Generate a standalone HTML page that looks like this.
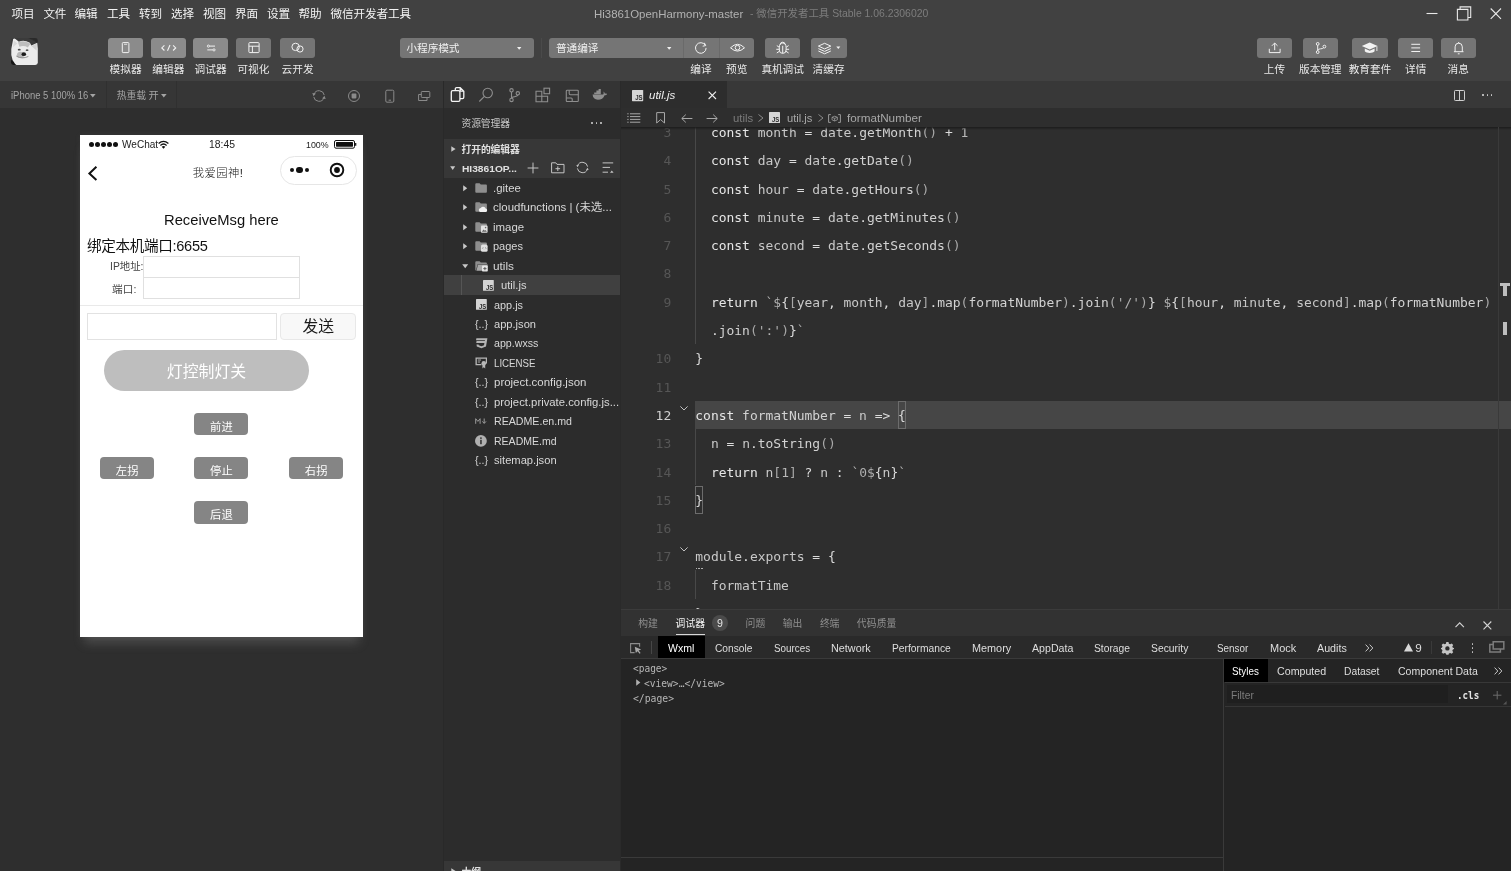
<!DOCTYPE html>
<html lang="zh">
<head>
<meta charset="utf-8">
<title>Hi3861OpenHarmony-master - 微信开发者工具</title>
<style>
*{box-sizing:border-box;margin:0;padding:0}
html,body{width:1511px;height:871px;overflow:hidden;background:#2e2e2e}
body{position:relative;font-family:"Liberation Sans","Noto Sans CJK SC",sans-serif;color:#d0d0d0;font-size:12px}
#w{position:absolute;left:0;top:0;width:1511px;height:871px;overflow:hidden;will-change:transform;filter:grayscale(1)}
.a{position:absolute}
.t{position:absolute;white-space:pre}
svg{position:absolute;overflow:visible}

.c{position:absolute;left:695.3px;white-space:pre;font-family:"DejaVu Sans Mono","Liberation Mono",monospace;font-size:12.96px;line-height:20px;height:20px;color:#dcdcdc}
.n{position:absolute;left:620px;width:51.200px;text-align:right;font-family:"DejaVu Sans Mono","Liberation Mono",monospace;font-size:12.96px;line-height:20px;color:#565656}
.k{color:#e6e6e6}.v{color:#c8c8c8}.f{color:#d2d2d2}.b{color:#a8a8a8}.s{color:#b0b0b0}.m{color:#b8b8b8}
</style>
</head>
<body>
<div id="w">
<div class="a" style="left:0px;top:0px;width:1511px;height:81px;background:#414141;"></div>
<div class="t" style="left:11.6px;top:5.60px;font-size:11.6px;line-height:16px;color:#f4f4f4;;letter-spacing:-0.203px;">项目</div>
<div class="t" style="left:43.4px;top:5.60px;font-size:11.6px;line-height:16px;color:#f4f4f4;;letter-spacing:-0.203px;">文件</div>
<div class="t" style="left:74.5px;top:5.60px;font-size:11.6px;line-height:16px;color:#f4f4f4;;letter-spacing:-0.203px;">编辑</div>
<div class="t" style="left:107px;top:5.60px;font-size:11.6px;line-height:16px;color:#f4f4f4;;letter-spacing:-0.203px;">工具</div>
<div class="t" style="left:139px;top:5.60px;font-size:11.6px;line-height:16px;color:#f4f4f4;;letter-spacing:-0.203px;">转到</div>
<div class="t" style="left:171px;top:5.60px;font-size:11.6px;line-height:16px;color:#f4f4f4;;letter-spacing:-0.203px;">选择</div>
<div class="t" style="left:203px;top:5.60px;font-size:11.6px;line-height:16px;color:#f4f4f4;;letter-spacing:-0.203px;">视图</div>
<div class="t" style="left:235px;top:5.60px;font-size:11.6px;line-height:16px;color:#f4f4f4;;letter-spacing:-0.203px;">界面</div>
<div class="t" style="left:267px;top:5.60px;font-size:11.6px;line-height:16px;color:#f4f4f4;;letter-spacing:-0.203px;">设置</div>
<div class="t" style="left:298.5px;top:5.60px;font-size:11.6px;line-height:16px;color:#f4f4f4;;letter-spacing:-0.203px;">帮助</div>
<div class="t" style="left:330.5px;top:5.60px;font-size:11.6px;line-height:16px;color:#f4f4f4;;letter-spacing:-0.112px;">微信开发者工具</div>
<div class="t" style="left:594.3px;top:5.80px;font-size:11.6px;line-height:16px;color:#b2b2b2;;transform-origin:0 50%;transform:scaleX(0.9852);">Hi3861OpenHarmony-master</div>
<div class="t" style="left:749.5px;top:6.30px;font-size:10.6px;line-height:15px;color:#7d7d7d;;transform-origin:0 50%;transform:scaleX(0.9831);">- 微信开发者工具 Stable 1.06.2306020</div>
<svg style="left:1420px;top:0px;" width="91" height="27" viewBox="0 0 91 27"><path d="M6.5 13.5H17.5" stroke="#e8e8e8" stroke-width="1.1" fill="none"/>
<path d="M37.4 9.400H47.900V20H37.400Z M40.1 9.400V6.900H50.700V17.500H47.900" stroke="#e8e8e8" stroke-width="1.1" fill="none"/>
<path d="M70.7 8.5L81 18.8M81 8.5L70.7 18.8" stroke="#e8e8e8" stroke-width="1.1" fill="none"/></svg>
<svg style="left:10.600px;top:38px" width="26.800" height="27" viewBox="0 0 27 27">
<defs><clipPath id="av"><rect x="0" y="0" width="27" height="27" rx="2.500"/></clipPath><filter id="bl" x="-20%" y="-20%" width="140%" height="140%"><feGaussianBlur stdDeviation=".55"/></filter></defs>
<g clip-path="url(#av)"><g filter="url(#bl)">
<rect x="-2" y="-2" width="31" height="31" fill="#3a3a3a"/>
<path d="M13 -2H29V8L24 3Z" fill="#2c2c2c"/>
<path d="M-2 20V29H9Z" fill="#161616"/>
<path d="M.3 11L2.200 .8Q3.200 -.2 4.500 .8L8 3.600Q13 1.400 19 4.600L20.500 7.500L26.500 4.800L27.500 13V29H8Q-1 24 .3 11Z" fill="#ececec"/>
<path d="M7 4.200Q13 1.800 19.500 5.600L17 9.500Q13 7 8.500 8.800Z" fill="#bebebe"/>
<path d="M20.500 8L26 5.500L25.800 12.500Z" fill="#d2d2d2"/>
<path d="M2 9L3 2.500L6.500 5.500Z" fill="#d8d8d8"/>
<path d="M6.500 15Q9 12.800 12 14.500L13 19.500Q9 21 5.500 18.500Z" fill="#b8b8b8"/>
<ellipse cx="8.300" cy="11.700" rx="1.500" ry=".9" fill="#4a4a4a"/>
<ellipse cx="16.200" cy="12.200" rx="1.400" ry=".9" fill="#555"/>
<ellipse cx="12.900" cy="16.200" rx="2.300" ry="1.900" fill="#1e1e1e"/>
<path d="M5.500 18.200Q11 21.500 17.500 18.500" stroke="#8a8a8a" stroke-width=".9" fill="none"/>
</g></g></svg>
<div class="a" style="left:108px;top:38px;width:35.4px;height:19.8px;background:#8b8b8b;border-radius:3px"></div>
<div class="t" style="left:109.6px;top:61.60px;font-size:10.7px;line-height:15px;color:#e9e9e9;;letter-spacing:0.061px;">模拟器</div>
<div class="a" style="left:150.6px;top:38px;width:35.4px;height:19.8px;background:#8b8b8b;border-radius:3px"></div>
<div class="t" style="left:152.2px;top:61.60px;font-size:10.7px;line-height:15px;color:#e9e9e9;;letter-spacing:0.061px;">编辑器</div>
<div class="a" style="left:193px;top:38px;width:35.4px;height:19.8px;background:#8b8b8b;border-radius:3px"></div>
<div class="t" style="left:194.6px;top:61.60px;font-size:10.7px;line-height:15px;color:#e9e9e9;;letter-spacing:0.061px;">调试器</div>
<div class="a" style="left:235.6px;top:38px;width:35.4px;height:19.8px;background:#757575;border-radius:3px"></div>
<div class="t" style="left:237.2px;top:61.60px;font-size:10.7px;line-height:15px;color:#e9e9e9;;letter-spacing:0.061px;">可视化</div>
<div class="a" style="left:279.8px;top:38px;width:35.4px;height:19.8px;background:#757575;border-radius:3px"></div>
<div class="t" style="left:281.4px;top:61.60px;font-size:10.7px;line-height:15px;color:#e9e9e9;;letter-spacing:0.061px;">云开发</div>
<svg style="left:108px;top:38px;" width="36" height="20" viewBox="0 0 36 20"><rect x="14.3" y="4.6" width="6.6" height="10" rx=".8" stroke="#f2f2f2" fill="none" stroke-width="1"/><path d="M16 6.3H19.2" stroke="#f2f2f2" fill="none" stroke-width=".8"/></svg>
<svg style="left:150.6px;top:38px;" width="36" height="20" viewBox="0 0 36 20"><path d="M13.4 7.3L10.800 9.900L13.400 12.500M22.100 7.300L24.700 9.900L22.100 12.500M19 7L16.5 12.800" stroke="#f2f2f2" fill="none" stroke-width="1.1"/></svg>
<svg style="left:193px;top:38px;" width="36" height="20" viewBox="0 0 36 20"><path d="M16.600 8.100H22M14.300 11.900H19.800" stroke="#f2f2f2" fill="none" stroke-width="1"/><circle cx="15.400" cy="8.100" r="1.100" stroke="#f2f2f2" fill="none" stroke-width=".9"/><circle cx="21" cy="11.900" r="1.100" stroke="#f2f2f2" fill="none" stroke-width=".9"/></svg>
<svg style="left:235.6px;top:38px;" width="36" height="20" viewBox="0 0 36 20"><rect x="12.900" y="4.600" width="10.200" height="10" rx=".8" stroke="#f2f2f2" fill="none" stroke-width="1"/><path d="M12.900 8.200H23.100M16.400 8.200V14.600" stroke="#f2f2f2" fill="none" stroke-width="1"/></svg>
<svg style="left:279.8px;top:38px;" width="36" height="20" viewBox="0 0 36 20"><circle cx="15.600" cy="8.900" r="3.700" stroke="#f2f2f2" fill="none" stroke-width="1"/><circle cx="20" cy="11" r="3.100" stroke="#f2f2f2" fill="none" stroke-width="1"/></svg>
<div class="a" style="left:400px;top:38px;width:134px;height:19.8px;background:#757575;border-radius:3px"></div>
<div class="t" style="left:406.5px;top:41.10px;font-size:10.7px;line-height:15px;color:#f0f0f0;;letter-spacing:-0.113px;">小程序模式</div>
<svg style="left:517.3px;top:46.6px;" width="5" height="3" viewBox="0 0 5 3"><path d="M0 0H4.400L2.200 2.700Z" fill="#f0f0f0"/></svg>
<div class="a" style="left:541px;top:38px;width:1px;height:20px;background:#4a4a4a;"></div>
<div class="a" style="left:549px;top:38px;width:205px;height:19.8px;background:#757575;border-radius:3px"></div>
<div class="a" style="left:683.4px;top:38px;width:1px;height:19.8px;background:#6a6a6a;"></div>
<div class="a" style="left:719px;top:38px;width:1px;height:19.8px;background:#6a6a6a;"></div>
<div class="t" style="left:556px;top:41.10px;font-size:10.7px;line-height:15px;color:#f0f0f0;;letter-spacing:-0.089px;">普通编译</div>
<svg style="left:667.3px;top:46.6px;" width="5" height="3" viewBox="0 0 5 3"><path d="M0 0H4.400L2.200 2.700Z" fill="#f0f0f0"/></svg>
<svg style="left:684px;top:38px;" width="36" height="20" viewBox="0 0 36 20"><path d="M21.300 7.200A5.300 5.300 0 1 0 22.100 9.900" stroke="#f2f2f2" fill="none" stroke-width="1"/><path d="M20.300 4.800L21.700 7.600L18.700 8.200" stroke="#f2f2f2" fill="none" stroke-width="1"/></svg>
<svg style="left:719.5px;top:38px;" width="36" height="20" viewBox="0 0 36 20"><path d="M10.500 9.800Q17.500 2.800 24.500 9.800Q17.500 16.400 10.500 9.800Z" stroke="#f2f2f2" fill="none" stroke-width="1"/><circle cx="17.500" cy="9.700" r="2.300" stroke="#f2f2f2" fill="none" stroke-width="1"/></svg>
<div class="t" style="left:690.3px;top:61.60px;font-size:10.7px;line-height:15px;color:#e9e9e9;;letter-spacing:0.009px;">编译</div>
<div class="t" style="left:726.0px;top:61.60px;font-size:10.7px;line-height:15px;color:#e9e9e9;;letter-spacing:0.009px;">预览</div>
<div class="a" style="left:765px;top:38px;width:35.4px;height:19.8px;background:#757575;border-radius:3px"></div>
<svg style="left:765px;top:38px;" width="36" height="20" viewBox="0 0 36 20"><path d="M14.300 9.600a3.400 4.600 0 0 1 6.800 0v2.400a3.400 3.400 0 0 1-6.800 0zM17.700 7.800V15.200M15.300 6.600a2.400 2.400 0 0 1 4.800 0M14.300 9.300L11.800 7.600M14.300 11.300H11.300M14.500 13.200L11.800 15M21.100 9.300L23.600 7.600M21.100 11.300H24.100M20.900 13.200L23.600 15" stroke="#f2f2f2" fill="none" stroke-width="1"/></svg>
<div class="t" style="left:761.5500000000001px;top:61.60px;font-size:10.7px;line-height:15px;color:#e9e9e9;;letter-spacing:-0.155px;">真机调试</div>
<div class="a" style="left:811px;top:38px;width:35.6px;height:19.8px;background:#757575;border-radius:3px"></div>
<svg style="left:811px;top:38px;" width="36" height="20" viewBox="0 0 36 20"><path d="M7.400 8.100L13.600 5.300L19.800 8.100L13.600 10.900ZM7.400 10.600L13.600 13.400L19.800 10.600M7.400 13L13.600 15.800L19.800 13" stroke="#f2f2f2" fill="none" stroke-width="1"/><path d="M25.300 8.500H29.300L27.300 11Z" fill="#f2f2f2"/></svg>
<div class="t" style="left:812.4px;top:61.60px;font-size:10.7px;line-height:15px;color:#e9e9e9;;letter-spacing:0.061px;">清缓存</div>
<div class="a" style="left:1257px;top:38px;width:35.3px;height:19.8px;background:#757575;border-radius:3px"></div>
<div class="t" style="left:1263.7px;top:61.60px;font-size:10.7px;line-height:15px;color:#e9e9e9;;letter-spacing:0.009px;">上传</div>
<div class="a" style="left:1303px;top:38px;width:35.3px;height:19.8px;background:#757575;border-radius:3px"></div>
<div class="t" style="left:1299.05px;top:61.60px;font-size:10.7px;line-height:15px;color:#e9e9e9;;letter-spacing:-0.089px;">版本管理</div>
<div class="a" style="left:1352.4px;top:38px;width:35.3px;height:19.8px;background:#757575;border-radius:3px"></div>
<div class="t" style="left:1348.75px;top:61.60px;font-size:10.7px;line-height:15px;color:#e9e9e9;;letter-spacing:-0.089px;">教育套件</div>
<div class="a" style="left:1398.2px;top:38px;width:35.3px;height:19.8px;background:#757575;border-radius:3px"></div>
<div class="t" style="left:1405.0px;top:61.60px;font-size:10.7px;line-height:15px;color:#e9e9e9;;letter-spacing:0.009px;">详情</div>
<div class="a" style="left:1441px;top:38px;width:35.3px;height:19.8px;background:#757575;border-radius:3px"></div>
<div class="t" style="left:1447.6px;top:61.60px;font-size:10.7px;line-height:15px;color:#e9e9e9;;letter-spacing:0.009px;">消息</div>
<svg style="left:1257px;top:38px;" width="36" height="20" viewBox="0 0 36 20"><path d="M12.300 10.800V14.600H23.100V10.800M17.700 12.200V5.200M14.900 7.800L17.700 5L20.500 7.800" stroke="#f2f2f2" fill="none" stroke-width="1"/></svg>
<svg style="left:1303px;top:38px;" width="36" height="20" viewBox="0 0 36 20"><circle cx="14.700" cy="5.900" r="1.400" stroke="#f2f2f2" fill="none" stroke-width="1"/><circle cx="14.700" cy="14.100" r="1.400" stroke="#f2f2f2" fill="none" stroke-width="1"/><circle cx="21.400" cy="8.600" r="1.400" stroke="#f2f2f2" fill="none" stroke-width="1"/><path d="M14.700 7.300V12.700M14.700 12.500C14.700 10 20 11.500 20.600 9.800" stroke="#f2f2f2" fill="none" stroke-width="1"/></svg>
<svg style="left:1352.4px;top:38px;" width="36" height="20" viewBox="0 0 36 20"><path d="M17.700 4.600L25.600 8.100L17.700 11.600L9.800 8.100Z" fill="#f2f2f2"/><path d="M12.800 10.600V13.300C14.500 15.600 20.900 15.600 22.600 13.300V10.600L17.700 12.800Z" fill="#f2f2f2"/><path d="M24.900 8.400V13" stroke="#f2f2f2" stroke-width=".9"/></svg>
<svg style="left:1398.2px;top:38px;" width="36" height="20" viewBox="0 0 36 20"><path d="M13.300 6.300H22.100M13.300 9.900H22.100M13.300 13.500H22.100" stroke="#f2f2f2" fill="none" stroke-width="1"/></svg>
<svg style="left:1441px;top:38px;" width="36" height="20" viewBox="0 0 36 20"><path d="M12.900 13.700H22.500M14.100 13.700V8.800a3.600 3.600 0 0 1 7.200 0V13.700M16.800 15.800H18.600M17.700 4V5.200" stroke="#f2f2f2" fill="none" stroke-width="1"/></svg>
<div class="a" style="left:0px;top:81px;width:443px;height:27.4px;background:#363636;"></div>
<div class="a" style="left:0px;top:108.4px;width:443px;height:763px;background:#2e2e2e;"></div>
<div class="a" style="left:106px;top:81px;width:1px;height:27.4px;background:#303030;"></div>
<div class="a" style="left:176px;top:81px;width:1px;height:27.4px;background:#303030;"></div>
<div class="t" style="left:10.7px;top:88.00px;font-size:10.6px;line-height:15px;color:#a4a4a4;;transform-origin:0 50%;transform:scaleX(0.8915);">iPhone 5 100% 16</div>
<svg style="left:90.3px;top:93.8px;" width="6" height="4" viewBox="0 0 6 4"><path d="M0 0H5.600L2.800 3.600Z" fill="#a4a4a4"/></svg>
<div class="t" style="left:116.7px;top:88.50px;font-size:9.8px;line-height:14px;color:#a4a4a4;;letter-spacing:-0.045px;">热重载</div>
<div class="t" style="left:148.6px;top:88.50px;font-size:10.2px;line-height:14px;color:#a4a4a4;;">开</div>
<svg style="left:161.2px;top:93.8px;" width="6" height="4" viewBox="0 0 6 4"><path d="M0 0H5.600L2.800 3.600Z" fill="#a4a4a4"/></svg>
<svg style="left:311.8px;top:88.8px;" width="14" height="14" viewBox="0 0 14 14"><path d="M2.020 5.190A5.300 5.300 0 0 1 12.220 6.080M11.980 8.810A5.300 5.300 0 0 1 1.780 7.920" stroke="#8a8a8a" fill="none" stroke-width="1"/><path d="M.3 3.900L3.900 4.500L1.500 7.200ZM13.700 10.100L10.100 9.500L12.500 6.800Z" fill="#8a8a8a"/></svg>
<svg style="left:347px;top:89px;" width="14" height="14" viewBox="0 0 14 14"><circle cx="7" cy="7" r="5.500" stroke="#8a8a8a" fill="none" stroke-width="1"/><rect x="4.600" y="4.600" width="4.800" height="4.800" rx=".8" fill="#8a8a8a"/></svg>
<svg style="left:383px;top:89px;" width="14" height="14" viewBox="0 0 14 14"><rect x="2.800" y="1.200" width="8" height="12" rx="1.200" stroke="#8a8a8a" fill="none" stroke-width="1"/><path d="M5.600 11.200H8" stroke="#8a8a8a" fill="none" stroke-width="1"/></svg>
<svg style="left:417px;top:89px;" width="14" height="14" viewBox="0 0 14 14"><rect x="4.300" y="2.500" width="8.500" height="6" rx=".8" stroke="#8a8a8a" fill="none" stroke-width="1"/><path d="M4.300 5.500H1.600V11.500H10V8.500" stroke="#8a8a8a" fill="none" stroke-width="1"/></svg>
<div class="a" style="left:80px;top:135px;width:283px;height:501.800px;background:#fff;box-shadow:0 10px 10px -4px rgba(170,170,170,.26),0 0 6px rgba(160,160,160,.08)"></div>
<div class="a" style="left:88.70px;top:142.200px;width:5.100px;height:5.100px;border-radius:50%;background:#111"></div>
<div class="a" style="left:94.85px;top:142.200px;width:5.100px;height:5.100px;border-radius:50%;background:#111"></div>
<div class="a" style="left:101.00px;top:142.200px;width:5.100px;height:5.100px;border-radius:50%;background:#111"></div>
<div class="a" style="left:107.15px;top:142.200px;width:5.100px;height:5.100px;border-radius:50%;background:#111"></div>
<div class="a" style="left:113.30px;top:142.200px;width:5.100px;height:5.100px;border-radius:50%;background:#111"></div>
<div class="t" style="left:121.9px;top:136.80px;font-size:10.6px;line-height:15px;color:#222;;transform-origin:0 50%;transform:scaleX(0.9481);">WeChat</div>
<svg style="left:158px;top:139.5px;" width="12" height="10" viewBox="0 0 12 10"><path d="M.6 3.600Q5.500 -.8 10.400 3.600M2.400 5.400Q5.500 2.600 8.600 5.400" stroke="#111" stroke-width="1.300" fill="none"/><path d="M5.500 8.800L3.700 6.800Q5.500 5.400 7.300 6.800Z" fill="#111"/></svg>
<div class="t" style="left:208.7px;top:136.00px;font-size:11.2px;line-height:16px;color:#222;;transform-origin:0 50%;transform:scaleX(0.9286);">18:45</div>
<div class="t" style="left:306.4px;top:137.80px;font-size:9.9px;line-height:14px;color:#222;;transform-origin:0 50%;transform:scaleX(0.8985);">100%</div>
<svg style="left:334px;top:139.8px;" width="24" height="9" viewBox="0 0 24 9"><rect x=".5" y=".5" width="20" height="7.700" rx="1.500" stroke="#111" fill="none" stroke-width="1"/><rect x="2" y="2" width="17" height="4.700" rx=".6" fill="#111"/><path d="M21.700 3V5.700" stroke="#111" stroke-width="1.200"/></svg>
<svg style="left:88px;top:166px;" width="10" height="15" viewBox="0 0 10 15"><path d="M8.400 .8L1.400 7.400L8.400 14" stroke="#111" stroke-width="2" fill="none"/></svg>
<div class="t" style="left:192.7px;top:164.80px;font-size:11.3px;line-height:16px;color:#222;font-weight:300;letter-spacing:0.493px;">我爱园神!</div>
<div class="a" style="left:280px;top:155.900px;width:77px;height:29px;border:1px solid #e6e6e6;border-radius:14.500px"></div>
<div class="a" style="left:289.700px;top:167.900px;width:4.400px;height:4.400px;border-radius:50%;background:#111"></div>
<div class="a" style="left:296px;top:166.800px;width:6.600px;height:6.600px;border-radius:50%;background:#111"></div>
<div class="a" style="left:304.800px;top:167.900px;width:4.400px;height:4.400px;border-radius:50%;background:#111"></div>
<svg style="left:328.9px;top:162.4px;" width="16" height="16" viewBox="0 0 16 16"><circle cx="8" cy="8" r="6.300" stroke="#111" stroke-width="1.900" fill="none"/><circle cx="8" cy="8" r="2.900" fill="#111"/></svg>
<div class="t" style="left:164.2px;top:208.60px;font-size:15px;line-height:21px;color:#111;;transform-origin:0 50%;transform:scaleX(0.9836);">ReceiveMsg here</div>
<div class="t" style="left:87.1px;top:236.30px;font-size:14.6px;line-height:20px;color:#111;;letter-spacing:-0.339px;">绑定本机端口:6655</div>
<div class="t" style="left:110px;top:259.00px;font-size:10.6px;line-height:15px;color:#444;;transform-origin:0 50%;transform:scaleX(0.9812);">IP地址:</div>
<div class="t" style="left:112px;top:281.50px;font-size:10.6px;line-height:15px;color:#444;;letter-spacing:0.180px;">端口:</div>
<div class="a" style="left:143.300px;top:255.900px;width:156.400px;height:22.200px;border:1px solid #e0e0e0"></div>
<div class="a" style="left:143.300px;top:277.100px;width:156.400px;height:22.200px;border:1px solid #e0e0e0"></div>
<div class="a" style="left:80px;top:305.2px;width:283px;height:1px;background:#e9e9e9;"></div>
<div class="a" style="left:87px;top:313px;width:190px;height:26.500px;border:1px solid #e2e2e2"></div>
<div class="a" style="left:280.400px;top:313px;width:75.400px;height:26.500px;border:1px solid #e8e8e8;border-radius:4px;background:#f8f8f8"></div>
<div class="t" style="left:302.5px;top:315.60px;font-size:15.8px;line-height:22px;color:#1a1a1a;;letter-spacing:-0.109px;">发送</div>
<div class="a" style="left:104.300px;top:350.200px;width:204.600px;height:40.800px;border-radius:20.400px;background:#bebebe"></div>
<div class="t" style="left:166.8px;top:360.80px;font-size:15.9px;line-height:22px;color:#fff;;letter-spacing:-0.013px;">灯控制灯关</div>
<div class="a" style="left:194.1px;top:413px;width:54.300px;height:22.400px;border-radius:4px;background:#858585"></div>
<div class="t" style="left:210.1px;top:418.70px;font-size:11.3px;line-height:16px;color:#fff;;letter-spacing:0.091px;">前进</div>
<div class="a" style="left:99.8px;top:457.1px;width:54.300px;height:22.400px;border-radius:4px;background:#858585"></div>
<div class="t" style="left:115.8px;top:462.80px;font-size:11.3px;line-height:16px;color:#fff;;letter-spacing:0.091px;">左拐</div>
<div class="a" style="left:194.1px;top:457.1px;width:54.300px;height:22.400px;border-radius:4px;background:#858585"></div>
<div class="t" style="left:210.1px;top:462.80px;font-size:11.3px;line-height:16px;color:#fff;;letter-spacing:0.091px;">停止</div>
<div class="a" style="left:288.8px;top:457.1px;width:54.300px;height:22.400px;border-radius:4px;background:#858585"></div>
<div class="t" style="left:304.8px;top:462.80px;font-size:11.3px;line-height:16px;color:#fff;;letter-spacing:0.091px;">右拐</div>
<div class="a" style="left:194.1px;top:501.4px;width:54.300px;height:22.400px;border-radius:4px;background:#858585"></div>
<div class="t" style="left:210.1px;top:507.10px;font-size:11.3px;line-height:16px;color:#fff;;letter-spacing:0.091px;">后退</div>
<div class="a" style="left:443px;top:81px;width:177px;height:790px;background:#2c2c2c;"></div>
<div class="a" style="left:443px;top:81px;width:1px;height:790px;background:#292929;"></div>
<div class="a" style="left:444px;top:81px;width:176px;height:27px;background:#343434;"></div>
<svg style="left:450px;top:86px;" width="16" height="17" viewBox="0 0 16 17"><path d="M5.300 4.200V2.900a1.300 1.300 0 0 1 1.300-1.300H10.200L13.800 5.200V11.300a1.300 1.300 0 0 1-1.300 1.300H10M10.200 1.600V5.200H13.800" stroke="#f4f4f4" fill="none" stroke-width="1.300"/><rect x="1.300" y="4.600" width="8.600" height="10.800" rx="1.300" stroke="#f4f4f4" fill="none" stroke-width="1.300"/></svg>
<svg style="left:478px;top:86px;" width="16" height="17" viewBox="0 0 16 17"><circle cx="9.700" cy="7" r="4.700" stroke="#8e8e8e" fill="none" stroke-width="1.1"/><path d="M6.400 10.400L1.300 15.500" stroke="#8e8e8e" fill="none" stroke-width="1.1"/></svg>
<svg style="left:506px;top:86px;" width="16" height="17" viewBox="0 0 16 17"><circle cx="5.500" cy="4.300" r="1.700" stroke="#8e8e8e" fill="none" stroke-width="1.1"/><circle cx="5.500" cy="13.900" r="1.700" stroke="#8e8e8e" fill="none" stroke-width="1.1"/><circle cx="11.800" cy="7.300" r="1.700" stroke="#8e8e8e" fill="none" stroke-width="1.1"/><path d="M5.500 6V12.200M11.800 9C11.800 11.200 5.500 10.200 5.500 12.200" stroke="#8e8e8e" fill="none" stroke-width="1.1"/></svg>
<svg style="left:535px;top:86px;" width="16" height="17" viewBox="0 0 16 17"><path d="M1 5.300H6.800V10.200H12.600V15.700H1ZM1 10.200H6.800V15.700" stroke="#8e8e8e" fill="none" stroke-width="1.1"/><rect x="9" y="2.200" width="5.600" height="5.500" stroke="#8e8e8e" fill="none" stroke-width="1.1"/></svg>
<svg style="left:565px;top:86px;" width="16" height="17" viewBox="0 0 16 17"><rect x="1.300" y="4.300" width="12" height="11.200" rx=".8" stroke="#8e8e8e" fill="none" stroke-width="1.1"/><path d="M4.200 4.300V7.600Q4.200 8.800 5.400 8.800H13.300M1.300 12H6.200Q7.200 12 7.200 13V15.500" stroke="#8e8e8e" fill="none" stroke-width="1.1"/></svg>
<svg style="left:592px;top:89px;" width="16" height="12" viewBox="0 0 16 12"><path d="M.6 5.600H11.200C11.800 4.600 11.800 3.600 11.300 2.600C12.300 3.100 12.800 3.900 12.900 4.700C13.600 4.400 14.400 4.500 15 4.900C14.600 5.900 13.700 6.300 12.600 6.300C11.600 9.300 9.100 10.800 5.900 10.800C2.600 10.800 .8 8.800 .6 5.600Z" fill="#8e8e8e"/><path d="M2.200 3.400H8.800V5.200H2.200ZM4.400 1.600H8.800V3.400H4.400ZM6.600 0H8.800V1.600H6.600Z" fill="#8e8e8e"/></svg>
<div class="t" style="left:461.5px;top:117.30px;font-size:9.8px;line-height:14px;color:#c6c6c6;;letter-spacing:-0.121px;">资源管理器</div>
<div class="a" style="left:591.4px;top:122.4px;width:1.6px;height:1.6px;background:#c6c6c6;border-radius:50%"></div>
<div class="a" style="left:595.8px;top:122.4px;width:1.6px;height:1.6px;background:#c6c6c6;border-radius:50%"></div>
<div class="a" style="left:600.1999999999999px;top:122.4px;width:1.6px;height:1.6px;background:#c6c6c6;border-radius:50%"></div>
<div class="a" style="left:444px;top:139px;width:176px;height:39px;background:#373737;"></div>
<svg style="left:450.5px;top:145.5px;" width="6" height="7" viewBox="0 0 6 7"><path d="M.3 .3L4.600 3L.3 5.700Z" fill="#c8c8c8"/></svg>
<div class="t" style="left:461.5px;top:143.10px;font-size:9.8px;line-height:14px;color:#e0e0e0;font-weight:700;letter-spacing:-0.096px;">打开的编辑器</div>
<svg style="left:450.4px;top:166.3px;" width="6" height="5" viewBox="0 0 6 5"><path d="M.2 .3H5.200L2.700 3.900Z" fill="#c8c8c8"/></svg>
<div class="t" style="left:461.5px;top:161.80px;font-size:9.8px;line-height:14px;color:#e0e0e0;font-weight:700;transform-origin:0 50%;transform:scaleX(1.0407);">HI3861OP...</div>
<svg style="left:527px;top:161.5px;" width="12" height="12" viewBox="0 0 12 12"><path d="M6 .6V11.400M.6 6H11.400" stroke="#c4c4c4" fill="none" stroke-width="1"/></svg>
<svg style="left:551px;top:162px;" width="14" height="12" viewBox="0 0 14 12"><path d="M.6 .8H4.800L6 2.400H13V10.800H.6Z" stroke="#c4c4c4" fill="none" stroke-width="1"/><path d="M6.800 4.400V9M4.500 6.700H9.100" stroke="#c4c4c4" fill="none" stroke-width="1"/></svg>
<svg style="left:576px;top:161.2px;" width="13" height="13" viewBox="0 0 13 13"><path d="M1.620 4.690A5.200 5.200 0 0 1 11.620 5.600M11.380 8.310A5.200 5.200 0 0 1 1.380 7.400" stroke="#c4c4c4" fill="none" stroke-width="1"/><path d="M.4 3.900L3 4.300L1.300 6.300ZM12.600 9.100L10 8.700L11.700 6.700Z" fill="#c4c4c4"/></svg>
<svg style="left:601.5px;top:162px;" width="12" height="12" viewBox="0 0 12 12"><path d="M.6 .9H11.200M.6 5.400H8M.6 10.200H6" stroke="#c4c4c4" fill="none" stroke-width="1"/><path d="M8 10.800L9.800 8.400L11.600 10.800Z" fill="#c4c4c4"/></svg>
<div class="a" style="left:444px;top:275.20000000000005px;width:176px;height:19.8px;background:#404040;"></div>
<div class="a" style="left:461px;top:275.20000000000005px;width:1px;height:19.8px;background:#555;"></div>
<svg style="left:462.5px;top:184.60000000000002px;" width="5" height="7" viewBox="0 0 5 7"><path d="M.2 .2L4.200 3.200L.2 6.200Z" fill="#c8c8c8"/></svg>
<svg style="left:475px;top:182.70000000000002px;" width="13" height="11" viewBox="0 0 13 11"><path d="M.3 1.200Q.3 .3 1.200 .3H4.600L5.800 1.600H11Q11.900 1.600 11.900 2.500V8.800Q11.900 9.700 11 9.700H1.200Q.3 9.700 .3 8.800Z" fill="#8e8e8e"/></svg>
<div class="t" style="left:493.3px;top:179.80px;font-size:11.3px;line-height:16px;color:#d8d8d8;;transform-origin:0 50%;transform:scaleX(1.0058);">.gitee</div>
<svg style="left:462.5px;top:204.06000000000003px;" width="5" height="7" viewBox="0 0 5 7"><path d="M.2 .2L4.200 3.200L.2 6.200Z" fill="#c8c8c8"/></svg>
<svg style="left:475px;top:202.16000000000003px;" width="13" height="11" viewBox="0 0 13 11"><path d="M.3 1.200Q.3 .3 1.200 .3H4.600L5.800 1.600H11Q11.900 1.600 11.900 2.500V8.800Q11.900 9.700 11 9.700H1.200Q.3 9.700 .3 8.800Z" fill="#8e8e8e"/><path d="M5.200 9.900a2 2 0 0 1 .6-3.900a2.600 2.600 0 0 1 4.800 .6a1.700 1.700 0 0 1 .4 3.300z" fill="#f0f0f0"/></svg>
<div class="t" style="left:493.3px;top:199.26px;font-size:11.3px;line-height:16px;color:#d8d8d8;;transform-origin:0 50%;transform:scaleX(1.0143);">cloudfunctions | (未选...</div>
<svg style="left:462.5px;top:223.52000000000004px;" width="5" height="7" viewBox="0 0 5 7"><path d="M.2 .2L4.200 3.200L.2 6.200Z" fill="#c8c8c8"/></svg>
<svg style="left:475px;top:221.62000000000003px;" width="13" height="11" viewBox="0 0 13 11"><path d="M.3 1.200Q.3 .3 1.200 .3H4.600L5.800 1.600H11Q11.900 1.600 11.900 2.500V8.800Q11.900 9.700 11 9.700H1.200Q.3 9.700 .3 8.800Z" fill="#8e8e8e"/><rect x="6" y="3.600" width="6.600" height="7.200" rx=".8" fill="#e2e2e2"/><path d="M6.800 9.800L8.600 7.600L9.800 8.800L10.600 8L11.900 9.800Z" fill="#666"/><circle cx="10.600" cy="5.600" r=".8" fill="#666"/></svg>
<div class="t" style="left:493.3px;top:218.72px;font-size:11.3px;line-height:16px;color:#d8d8d8;;transform-origin:0 50%;transform:scaleX(1.0136);">image</div>
<svg style="left:462.5px;top:242.98000000000002px;" width="5" height="7" viewBox="0 0 5 7"><path d="M.2 .2L4.200 3.200L.2 6.200Z" fill="#c8c8c8"/></svg>
<svg style="left:475px;top:241.08px;" width="13" height="11" viewBox="0 0 13 11"><path d="M.3 1.200Q.3 .3 1.200 .3H4.600L5.800 1.600H11Q11.900 1.600 11.900 2.500V8.800Q11.900 9.700 11 9.700H1.200Q.3 9.700 .3 8.800Z" fill="#8e8e8e"/><rect x="6" y="3.600" width="6.600" height="7.200" rx="1.600" fill="#e2e2e2"/><path d="M8.400 6.200L7.400 7.200L8.400 8.200M10.200 6.200L11.200 7.200L10.200 8.200" stroke="#777" stroke-width=".6" fill="none"/></svg>
<div class="t" style="left:493.3px;top:238.18px;font-size:11.3px;line-height:16px;color:#d8d8d8;;transform-origin:0 50%;transform:scaleX(0.9746);">pages</div>
<svg style="left:461.5px;top:263.84px;" width="7" height="5" viewBox="0 0 7 5"><path d="M.2 .2H6.200L3.200 4.200Z" fill="#c8c8c8"/></svg>
<svg style="left:475px;top:260.53999999999996px;" width="13" height="11" viewBox="0 0 13 11"><path d="M.3 1.200Q.3 .3 1.200 .3H4.600L5.800 1.600H11Q11.900 1.600 11.900 2.500V3H2.800L.9 9.600Q.3 9.400 .3 8.800Z" fill="#8e8e8e"/><path d="M3 3.600H12.800L11.200 9.700H1.400Z" fill="#a8a8a8"/><rect x="7" y="4.600" width="5.800" height="6" rx=".8" fill="#e6e6e6"/><path d="M9.900 6V9.200M8.300 7.600H11.500" stroke="#555" stroke-width=".9"/></svg>
<div class="t" style="left:493.3px;top:257.64px;font-size:11.3px;line-height:16px;color:#d8d8d8;;transform-origin:0 50%;transform:scaleX(1.0451);">utils</div>
<svg style="left:483px;top:279.70000000000005px;" width="11" height="11" viewBox="0 0 11 11"><rect x="0" y="0" width="10.800" height="10.800" rx=".6" fill="#d4d4d4"/><text x="3" y="9.800" font-family="Liberation Sans,sans-serif" font-size="6.600" font-weight="700" fill="#2a2a2a" textLength="7.200" lengthAdjust="spacingAndGlyphs">JS</text></svg>
<div class="t" style="left:500.6px;top:277.10px;font-size:11.3px;line-height:16px;color:#d8d8d8;;transform-origin:0 50%;transform:scaleX(0.9903);">util.js</div>
<svg style="left:476px;top:299.16px;" width="11" height="11" viewBox="0 0 11 11"><rect x="0" y="0" width="10.800" height="10.800" rx=".6" fill="#d4d4d4"/><text x="3" y="9.800" font-family="Liberation Sans,sans-serif" font-size="6.600" font-weight="700" fill="#2a2a2a" textLength="7.200" lengthAdjust="spacingAndGlyphs">JS</text></svg>
<div class="t" style="left:493.6px;top:296.56px;font-size:11.3px;line-height:16px;color:#d8d8d8;;transform-origin:0 50%;transform:scaleX(0.9617);">app.js</div>
<div class="t" style="left:474.5px;top:315.72px;font-size:11.5px;line-height:16px;color:#d0d0d0;font-family:'Liberation Sans','Noto Sans CJK SC',sans-serif;;transform-origin:0 50%;transform:scaleX(0.9234);">{..}</div>
<div class="t" style="left:493.6px;top:316.02px;font-size:11.3px;line-height:16px;color:#d8d8d8;;transform-origin:0 50%;transform:scaleX(0.9832);">app.json</div>
<svg style="left:474.8px;top:338.28000000000003px;" width="13" height="11" viewBox="0 0 13 11"><path d="M1.400 .3H12.400L11 8.400L6.400 10.300L1.800 8.400L1.500 6.400H3.600L3.800 7.200L6.400 8.200L9 7.200L9.400 5H1.200L1.600 3H9.800L10 2.200H1Z" fill="#b4b4b4"/></svg>
<div class="t" style="left:493.6px;top:335.48px;font-size:11.3px;line-height:16px;color:#d8d8d8;;transform-origin:0 50%;transform:scaleX(0.9428);">app.wxss</div>
<svg style="left:474.8px;top:357.44000000000005px;" width="13" height="12" viewBox="0 0 13 12"><path d="M.5 .5H12V6.500H10.800V1.800H1.800V7H6.500V8.300H.5Z" fill="#b8b8b8"/><path d="M2.800 3H6M2.800 5H5" stroke="#b8b8b8" stroke-width=".9"/><circle cx="8.800" cy="6.200" r="2.300" fill="#b8b8b8"/><path d="M7.400 7.800V11.400L8.800 10.300L10.200 11.400V7.800Z" fill="#b8b8b8"/></svg>
<div class="t" style="left:493.6px;top:354.94px;font-size:11.3px;line-height:16px;color:#d8d8d8;;transform-origin:0 50%;transform:scaleX(0.8564);">LICENSE</div>
<div class="t" style="left:474.5px;top:374.10px;font-size:11.5px;line-height:16px;color:#d0d0d0;font-family:'Liberation Sans','Noto Sans CJK SC',sans-serif;;transform-origin:0 50%;transform:scaleX(0.9234);">{..}</div>
<div class="t" style="left:493.6px;top:374.40px;font-size:11.3px;line-height:16px;color:#d8d8d8;;transform-origin:0 50%;transform:scaleX(1.0147);">project.config.json</div>
<div class="t" style="left:474.5px;top:393.56px;font-size:11.5px;line-height:16px;color:#d0d0d0;font-family:'Liberation Sans','Noto Sans CJK SC',sans-serif;;transform-origin:0 50%;transform:scaleX(0.9234);">{..}</div>
<div class="t" style="left:493.6px;top:393.86px;font-size:11.3px;line-height:16px;color:#d8d8d8;;transform-origin:0 50%;transform:scaleX(1.0012);">project.private.config.js...</div>
<svg style="left:474.5px;top:418.32000000000005px;" width="13" height="7" viewBox="0 0 13 7"><path d="M.7 5.800V.7L2.900 3.400L5.100 .7V5.800" stroke="#9a9a9a" stroke-width="1" fill="none"/><path d="M9.200 .5V5.200M7.400 3.400L9.200 5.400L11 3.400" stroke="#9a9a9a" stroke-width="1" fill="none"/></svg>
<div class="t" style="left:493.6px;top:413.32px;font-size:11.3px;line-height:16px;color:#d8d8d8;;transform-origin:0 50%;transform:scaleX(0.9400);">README.en.md</div>
<svg style="left:474.9px;top:434.98px;" width="12" height="12" viewBox="0 0 12 12"><circle cx="5.900" cy="5.900" r="5.900" fill="#b0b0b0"/><rect x="5.200" y="4.800" width="1.500" height="4.400" fill="#2c2c2c"/><circle cx="5.950" cy="3.100" r=".9" fill="#2c2c2c"/></svg>
<div class="t" style="left:493.6px;top:432.78px;font-size:11.3px;line-height:16px;color:#d8d8d8;;transform-origin:0 50%;transform:scaleX(0.9319);">README.md</div>
<div class="t" style="left:474.5px;top:451.94px;font-size:11.5px;line-height:16px;color:#d0d0d0;font-family:'Liberation Sans','Noto Sans CJK SC',sans-serif;;transform-origin:0 50%;transform:scaleX(0.9234);">{..}</div>
<div class="t" style="left:493.6px;top:452.24px;font-size:11.3px;line-height:16px;color:#d8d8d8;;transform-origin:0 50%;transform:scaleX(0.9870);">sitemap.json</div>
<div class="a" style="left:444px;top:860.8px;width:176px;height:11px;background:#373737;"></div>
<svg style="left:450.5px;top:868px;" width="6" height="7" viewBox="0 0 6 7"><path d="M.3 .3L4.600 3L.3 5.700Z" fill="#c8c8c8"/></svg>
<div class="t" style="left:461.5px;top:866.30px;font-size:9.8px;line-height:14px;color:#e0e0e0;font-weight:700;letter-spacing:-0.094px;">大纲</div>
<div class="a" style="left:620px;top:81px;width:891px;height:528px;background:#2e2e2e;"></div>
<div class="a" style="left:695.3px;top:400.8px;width:815.7px;height:28.3px;background:#464646;"></div>
<div class="a" style="left:897.600px;top:400.800px;width:8.400px;height:28.300px;border:1px solid #6c6c6c"></div>
<div class="a" style="left:694.900px;top:485.600px;width:8.200px;height:28.300px;border:1px solid #6c6c6c"></div>
<div class="a" style="left:695.2px;top:127px;width:1px;height:216.95000000000005px;background:#484848;"></div>
<div class="a" style="left:695.2px;top:428.85px;width:1px;height:56.6px;background:#484848;"></div>
<div class="a" style="left:695.2px;top:570.35px;width:1px;height:28.3px;background:#484848;"></div>
<div class="n" style="top:122.90px">3</div>
<div class="c" style="top:122.90px">  <span class="k">const</span> <span class="v">month</span> = <span class="v">date</span>.<span class="f">getMonth</span><span class="b">()</span> + <span class="m">1</span></div>
<div class="n" style="top:151.20px">4</div>
<div class="c" style="top:151.20px">  <span class="k">const</span> <span class="v">day</span> = <span class="v">date</span>.<span class="f">getDate</span><span class="b">()</span></div>
<div class="n" style="top:179.50px">5</div>
<div class="c" style="top:179.50px">  <span class="k">const</span> <span class="v">hour</span> = <span class="v">date</span>.<span class="f">getHours</span><span class="b">()</span></div>
<div class="n" style="top:207.80px">6</div>
<div class="c" style="top:207.80px">  <span class="k">const</span> <span class="v">minute</span> = <span class="v">date</span>.<span class="f">getMinutes</span><span class="b">()</span></div>
<div class="n" style="top:236.10px">7</div>
<div class="c" style="top:236.10px">  <span class="k">const</span> <span class="v">second</span> = <span class="v">date</span>.<span class="f">getSeconds</span><span class="b">()</span></div>
<div class="n" style="top:264.40px">8</div>
<div class="n" style="top:292.70px">9</div>
<div class="c" style="top:292.70px">  <span class="k">return</span> <span class="s">`$</span>{<span class="b">[</span><span class="v">year</span>, <span class="v">month</span>, <span class="v">day</span><span class="b">]</span>.<span class="f">map</span><span class="b">(</span><span class="f">formatNumber</span><span class="b">)</span>.<span class="f">join</span><span class="b">(</span><span class="s">'/'</span><span class="b">)</span>}<span class="s"> $</span>{<span class="b">[</span><span class="v">hour</span>, <span class="v">minute</span>, <span class="v">second</span><span class="b">]</span>.<span class="f">map</span><span class="b">(</span><span class="f">formatNumber</span><span class="b">)</span></div>
<div class="c" style="top:321.00px">  .<span class="f">join</span><span class="b">(</span><span class="s">':'</span><span class="b">)</span>}<span class="s">`</span></div>
<div class="n" style="top:349.30px">10</div>
<div class="c" style="top:349.30px">}</div>
<div class="n" style="top:377.60px">11</div>
<div class="n" style="top:405.90px;color:#cfcfcf">12</div>
<div class="c" style="top:405.90px"><span class="k">const</span> <span class="f">formatNumber</span> = <span class="v">n</span> =&gt; {</div>
<div class="n" style="top:434.20px">13</div>
<div class="c" style="top:434.20px">  <span class="v">n</span> = <span class="v">n</span>.<span class="f">toString</span><span class="b">()</span></div>
<div class="n" style="top:462.50px">14</div>
<div class="c" style="top:462.50px">  <span class="k">return</span> <span class="v">n</span><span class="b">[</span><span class="m">1</span><span class="b">]</span> ? <span class="v">n</span> : <span class="s">`0$</span>{<span class="v">n</span>}<span class="s">`</span></div>
<div class="n" style="top:490.80px">15</div>
<div class="c" style="top:490.80px">}</div>
<div class="n" style="top:519.10px">16</div>
<div class="n" style="top:547.40px">17</div>
<div class="c" style="top:547.40px"><span class="v">module</span>.<span class="v">exports</span> = {</div>
<div class="n" style="top:575.70px">18</div>
<div class="c" style="top:575.70px">  <span class="v">formatTime</span></div>
<div class="n" style="top:604.00px">19</div>
<div class="c" style="top:604.00px">}</div>
<svg style="left:679.5px;top:405.7px;" width="8" height="5" viewBox="0 0 8 5"><path d="M.4 .4L4 4L7.600 .4" stroke="#c0c0c0" stroke-width="1" fill="none"/></svg>
<svg style="left:679.5px;top:547.3px;" width="8" height="5" viewBox="0 0 8 5"><path d="M.4 .4L4 4L7.600 .4" stroke="#c0c0c0" stroke-width="1" fill="none"/></svg>
<div class="a" style="left:695.5px;top:567.8px;width:1.5px;height:1.3px;background:#b0b0b0;"></div>
<div class="a" style="left:698.3px;top:567.8px;width:1.5px;height:1.3px;background:#b0b0b0;"></div>
<div class="a" style="left:701.1px;top:567.8px;width:1.5px;height:1.3px;background:#b0b0b0;"></div>
<div class="a" style="left:620px;top:81px;width:891px;height:27px;background:#383838;"></div>
<div class="a" style="left:620px;top:81px;width:107px;height:27px;background:#2d2d2d;"></div>
<div class="a" style="left:620px;top:107.8px;width:891px;height:19.2px;background:#2e2e2e;"></div>
<div class="a" style="left:620px;top:127px;width:891px;height:3px;background:linear-gradient(#1c1c1c,rgba(46,46,46,0))"></div>
<svg style="left:631.5px;top:89.5px;" width="11.2" height="11.2" viewBox="0 0 11.2 11.2"><rect x="0" y="0" width="11.2" height="11.2" rx=".6" fill="#d6d6d6"/><text x="3.14" y="10.08" font-family="Liberation Sans,sans-serif" font-size="6.72" font-weight="700" fill="#2a2a2a" textLength="7.39" lengthAdjust="spacingAndGlyphs">JS</text></svg>
<div class="t" style="left:648.8px;top:87.00px;font-size:11.6px;line-height:16px;color:#f0f0f0;font-style:italic;transform-origin:0 50%;transform:scaleX(0.9916);">util.js</div>
<svg style="left:707.5px;top:91px;" width="9" height="9" viewBox="0 0 9 9"><path d="M.6 .6L8 8M8 .6L.6 8" stroke="#f0f0f0" stroke-width="1.100" fill="none"/></svg>
<svg style="left:1453.5px;top:89.5px;" width="11" height="11" viewBox="0 0 11 11"><rect x=".5" y=".5" width="10" height="10" rx=".8" stroke="#d0d0d0" fill="none"/><path d="M5.500 .5V10.500" stroke="#d0d0d0"/></svg>
<div class="a" style="left:1482.4px;top:94.3px;width:1.5px;height:1.5px;background:#d0d0d0;border-radius:50%"></div>
<div class="a" style="left:1486.6000000000001px;top:94.3px;width:1.5px;height:1.5px;background:#d0d0d0;border-radius:50%"></div>
<div class="a" style="left:1490.8000000000002px;top:94.3px;width:1.5px;height:1.5px;background:#d0d0d0;border-radius:50%"></div>
<svg style="left:627px;top:113px;" width="14" height="10" viewBox="0 0 14 10"><path d="M3 .8H13.300M3 3.600H13.300M3 6.400H13.300M3 9.200H13.300" stroke="#a8a8a8" fill="none" stroke-width="1"/><path d="M.3 .8H1.600M.3 3.600H1.600M.3 6.400H1.600M.3 9.200H1.600" stroke="#a8a8a8" fill="none" stroke-width="1"/></svg>
<svg style="left:656px;top:111.5px;" width="10" height="12" viewBox="0 0 10 12"><path d="M.7 .6H8.500V11L4.600 7.600L.7 11Z" stroke="#a8a8a8" fill="none" stroke-width="1"/></svg>
<svg style="left:681px;top:113.5px;" width="12" height="9" viewBox="0 0 12 9"><path d="M11.400 4.500H.8M4.800 .6L.8 4.500L4.800 8.400" stroke="#a8a8a8" fill="none" stroke-width="1"/></svg>
<svg style="left:706px;top:113.5px;" width="12" height="9" viewBox="0 0 12 9"><path d="M.6 4.500H11.200M7.200 .6L11.200 4.500L7.200 8.400" stroke="#a8a8a8" fill="none" stroke-width="1"/></svg>
<div class="t" style="left:732.7px;top:109.80px;font-size:11.2px;line-height:16px;color:#7c7c7c;;transform-origin:0 50%;transform:scaleX(1.0097);">utils</div>
<svg style="left:757.5px;top:114px;" width="6" height="8" viewBox="0 0 6 8"><path d="M.5 .5L5 4L.5 7.500" stroke="#8a8a8a" fill="none" stroke-width="1"/></svg>
<svg style="left:769px;top:112.2px;" width="11" height="11" viewBox="0 0 11 11"><rect x="0" y="0" width="11" height="11" rx=".6" fill="#d6d6d6"/><text x="3.08" y="9.90" font-family="Liberation Sans,sans-serif" font-size="6.60" font-weight="700" fill="#2a2a2a" textLength="7.26" lengthAdjust="spacingAndGlyphs">JS</text></svg>
<div class="t" style="left:787.3px;top:109.80px;font-size:11.2px;line-height:16px;color:#a8a8a8;;transform-origin:0 50%;transform:scaleX(0.9961);">util.js</div>
<svg style="left:817.5px;top:114px;" width="6" height="8" viewBox="0 0 6 8"><path d="M.5 .5L5 4L.5 7.500" stroke="#8a8a8a" fill="none" stroke-width="1"/></svg>
<svg style="left:828px;top:113.5px;" width="13" height="9" viewBox="0 0 13 9"><path d="M2.800 .6H.6V8.400H2.800M10.200 .6H12.400V8.400H10.200" stroke="#9a9a9a" fill="none" stroke-width="1"/><path d="M4 3.300L6.800 2.200L9.400 3.300V5.800L6.600 7L4 5.800ZM4 3.300L6.600 4.400L9.400 3.300M6.600 4.400V7" stroke="#9a9a9a" fill="none" stroke-width=".8"/></svg>
<div class="t" style="left:847px;top:109.80px;font-size:11.2px;line-height:16px;color:#a8a8a8;;transform-origin:0 50%;transform:scaleX(1.0462);">formatNumber</div>
<div class="a" style="left:1498px;top:127px;width:1px;height:482px;background:#3a3a3a;"></div>
<div class="a" style="left:1499.5px;top:283px;width:10.5px;height:2.6px;background:#bdbdbd;"></div>
<div class="a" style="left:1503px;top:283px;width:3.8px;height:13px;background:#bdbdbd;"></div>
<div class="a" style="left:1502.8px;top:322px;width:4px;height:13px;background:#bdbdbd;"></div>
<div class="a" style="left:620px;top:609px;width:891px;height:262px;background:#242424;"></div>
<div class="a" style="left:620px;top:609px;width:891px;height:26.8px;background:#323232;"></div>
<div class="a" style="left:620px;top:609px;width:891px;height:1px;background:#3b3b3b;"></div>
<div class="a" style="left:620px;top:81px;width:1px;height:790px;background:#2a2a2a;"></div>
<div class="t" style="left:638.3px;top:617.00px;font-size:9.8px;line-height:14px;color:#8e8e8e;;letter-spacing:-0.194px;">构建</div>
<div class="t" style="left:675.6px;top:617.00px;font-size:9.8px;line-height:14px;color:#f2f2f2;;letter-spacing:0.005px;">调试器</div>
<div class="a" style="left:675.6px;top:634.3px;width:29.4px;height:1px;background:#d8d8d8;"></div>
<div class="a" style="left:711.900px;top:614.900px;width:16px;height:16px;border-radius:8px;background:#4b4b4b"></div>
<div class="t" style="left:719.9px;top:615.50px;font-size:10.6px;line-height:15px;color:#e4e4e4;transform:translateX(-50%);">9</div>
<div class="t" style="left:745.5px;top:617.00px;font-size:9.8px;line-height:14px;color:#8e8e8e;;letter-spacing:0.206px;">问题</div>
<div class="t" style="left:782.8px;top:617.00px;font-size:9.8px;line-height:14px;color:#8e8e8e;;letter-spacing:-0.094px;">输出</div>
<div class="t" style="left:819.9px;top:617.00px;font-size:9.8px;line-height:14px;color:#8e8e8e;;letter-spacing:-0.094px;">终端</div>
<div class="t" style="left:856.8px;top:617.00px;font-size:9.8px;line-height:14px;color:#8e8e8e;;letter-spacing:0.138px;">代码质量</div>
<svg style="left:1454.5px;top:622px;" width="10" height="6" viewBox="0 0 10 6"><path d="M.5 5.200L4.700 .8L8.900 5.200" stroke="#d4d4d4" stroke-width="1.100" fill="none"/></svg>
<svg style="left:1483px;top:621.2px;" width="9" height="9" viewBox="0 0 9 9"><path d="M.5 .5L8.300 8.300M8.300 .5L.5 8.300" stroke="#d4d4d4" stroke-width="1.100" fill="none"/></svg>
<div class="a" style="left:621px;top:635.8px;width:890px;height:22.4px;background:#2a2a2a;"></div>
<div class="a" style="left:621px;top:658px;width:890px;height:1px;background:#3a3a3a;"></div>
<svg style="left:630px;top:642.5px;" width="12" height="11" viewBox="0 0 12 11"><path d="M4.600 9.600H.6V.6H9.600V3.800" stroke="#8c8c8c" stroke-width="1.100" fill="none"/><path d="M4.800 3.800L11.200 6.400L8.600 7.400L10.600 10L9.600 10.700L7.600 8.200L5.800 10Z" fill="#a8a8a8"/></svg>
<div class="a" style="left:651px;top:640.7px;width:1px;height:13px;background:#474747;"></div>
<div class="a" style="left:657.7px;top:636px;width:47.7px;height:22px;background:#000;"></div>
<div class="t" style="left:667.6px;top:639.90px;font-size:11.7px;line-height:16px;color:#fff;;transform-origin:0 50%;transform:scaleX(0.9035);">Wxml</div>
<div class="t" style="left:715.3px;top:639.90px;font-size:11.7px;line-height:16px;color:#dedede;;transform-origin:0 50%;transform:scaleX(0.8697);">Console</div>
<div class="t" style="left:773.9px;top:639.90px;font-size:11.7px;line-height:16px;color:#dedede;;transform-origin:0 50%;transform:scaleX(0.8417);">Sources</div>
<div class="t" style="left:831.4px;top:639.90px;font-size:11.7px;line-height:16px;color:#dedede;;transform-origin:0 50%;transform:scaleX(0.9259);">Network</div>
<div class="t" style="left:892.4px;top:639.90px;font-size:11.7px;line-height:16px;color:#dedede;;transform-origin:0 50%;transform:scaleX(0.8786);">Performance</div>
<div class="t" style="left:972.4px;top:639.90px;font-size:11.7px;line-height:16px;color:#dedede;;transform-origin:0 50%;transform:scaleX(0.9285);">Memory</div>
<div class="t" style="left:1032.1px;top:639.90px;font-size:11.7px;line-height:16px;color:#dedede;;transform-origin:0 50%;transform:scaleX(0.9080);">AppData</div>
<div class="t" style="left:1094.2px;top:639.90px;font-size:11.7px;line-height:16px;color:#dedede;;transform-origin:0 50%;transform:scaleX(0.8794);">Storage</div>
<div class="t" style="left:1150.7px;top:639.90px;font-size:11.7px;line-height:16px;color:#dedede;;transform-origin:0 50%;transform:scaleX(0.8832);">Security</div>
<div class="t" style="left:1217.4px;top:639.90px;font-size:11.7px;line-height:16px;color:#dedede;;transform-origin:0 50%;transform:scaleX(0.8449);">Sensor</div>
<div class="t" style="left:1269.6px;top:639.90px;font-size:11.7px;line-height:16px;color:#dedede;;transform-origin:0 50%;transform:scaleX(0.9378);">Mock</div>
<div class="t" style="left:1316.6px;top:639.90px;font-size:11.7px;line-height:16px;color:#dedede;;transform-origin:0 50%;transform:scaleX(0.9174);">Audits</div>
<svg style="left:1364.5px;top:643.5px;" width="9" height="8" viewBox="0 0 9 8"><path d="M.6 .6L3.800 4L.6 7.400M4.600 .6L7.800 4L4.600 7.400" stroke="#c8c8c8" stroke-width="1" fill="none"/></svg>
<svg style="left:1403.5px;top:642.8px;" width="10" height="9" viewBox="0 0 10 9"><path d="M4.500 .3L9 8.500H0Z" fill="#d8d8d8"/></svg>
<div class="t" style="left:1415.3px;top:639.90px;font-size:11.7px;line-height:16px;color:#dedede;;">9</div>
<div class="a" style="left:1431px;top:640.7px;width:1px;height:13px;background:#3a3a3a;"></div>
<svg style="left:1440.9px;top:641.5px;" width="13" height="13" viewBox="0 0 13 13"><path d="M5.300 0H7.500L7.900 1.700L9.200 2.300L10.700 1.400L12.200 2.900L11.300 4.400L11.900 5.700L13 6V7L11.900 7.500L11.300 8.800L12.200 10.300L10.700 11.800L9.200 10.900L7.900 11.500L7.500 12.800H5.300L4.900 11.500L3.600 10.900L2.100 11.800L.6 10.300L1.500 8.800L.9 7.500L0 7V6L.9 5.700L1.500 4.400L.6 2.900L2.100 1.400L3.600 2.300L4.900 1.700Z M6.400 4.200A2.200 2.200 0 1 0 6.400 8.600A2.200 2.200 0 1 0 6.400 4.200Z" fill="#c4c4c4" fill-rule="evenodd"/></svg>
<div class="a" style="left:1471.7px;top:643.0px;width:1.8px;height:1.8px;background:#c4c4c4;border-radius:50%"></div>
<div class="a" style="left:1471.7px;top:647.1px;width:1.8px;height:1.8px;background:#c4c4c4;border-radius:50%"></div>
<div class="a" style="left:1471.7px;top:651.2px;width:1.8px;height:1.8px;background:#c4c4c4;border-radius:50%"></div>
<svg style="left:1489px;top:641.3px;" width="16" height="12" viewBox="0 0 16 12"><path d="M4.200 .8H14.800V8H4.200Z" stroke="#7c7c7c" stroke-width="1.500" fill="none"/><path d="M4.200 3.400H.8V11H11.400V8" stroke="#7c7c7c" stroke-width="1.500" fill="none"/></svg>
<div class="t" style="left:632.9px;top:662.00px;font-size:9.7px;line-height:14px;color:#b6b6b6;font-family:'DejaVu Sans Mono','Liberation Mono',monospace;;transform-origin:0 50%;transform:scaleX(0.9800);">&lt;page&gt;</div>
<svg style="left:636.3px;top:679.4px;" width="5" height="7" viewBox="0 0 5 7"><path d="M.2 .2L4.400 3.500L.2 6.800Z" fill="#b0b0b0"/></svg>
<div class="t" style="left:643.8px;top:677.40px;font-size:9.7px;line-height:14px;color:#b6b6b6;font-family:'DejaVu Sans Mono','Liberation Mono',monospace;;transform-origin:0 50%;transform:scaleX(0.9895);">&lt;view&gt;…&lt;/view&gt;</div>
<div class="t" style="left:632.9px;top:692.30px;font-size:9.7px;line-height:14px;color:#b6b6b6;font-family:'DejaVu Sans Mono','Liberation Mono',monospace;;transform-origin:0 50%;transform:scaleX(1.0067);">&lt;/page&gt;</div>
<div class="a" style="left:621px;top:856.5px;width:603px;height:1px;background:#3a3a3a;"></div>
<div class="a" style="left:1223px;top:659px;width:1px;height:212px;background:#3a3a3a;"></div>
<div class="a" style="left:1224px;top:659px;width:44.2px;height:23px;background:#000;"></div>
<div class="a" style="left:1224.5px;top:681.8px;width:287px;height:1px;background:#383838;"></div>
<div class="t" style="left:1232.4px;top:662.90px;font-size:11.7px;line-height:16px;color:#fff;;transform-origin:0 50%;transform:scaleX(0.8420);">Styles</div>
<div class="t" style="left:1276.9px;top:662.90px;font-size:11.7px;line-height:16px;color:#dedede;;transform-origin:0 50%;transform:scaleX(0.9122);">Computed</div>
<div class="t" style="left:1344.4px;top:662.90px;font-size:11.7px;line-height:16px;color:#dedede;;transform-origin:0 50%;transform:scaleX(0.8788);">Dataset</div>
<div class="t" style="left:1397.6px;top:662.90px;font-size:11.7px;line-height:16px;color:#dedede;;transform-origin:0 50%;transform:scaleX(0.9031);">Component Data</div>
<svg style="left:1493.5px;top:666.8px;" width="9" height="8" viewBox="0 0 9 8"><path d="M.6 .6L3.800 4L.6 7.400M4.600 .6L7.800 4L4.600 7.400" stroke="#c8c8c8" stroke-width="1" fill="none"/></svg>
<div class="a" style="left:1227.3px;top:685.4px;width:221px;height:18px;background:#1f1f1f;"></div>
<div class="t" style="left:1230.5px;top:687.80px;font-size:11px;line-height:15px;color:#7c7c7c;;transform-origin:0 50%;transform:scaleX(0.9324);">Filter</div>
<div class="t" style="left:1457.2px;top:687.80px;font-size:10.6px;line-height:15px;color:#e4e4e4;font-family:'DejaVu Sans Mono','Liberation Mono',monospace;font-weight:700;transform-origin:0 50%;transform:scaleX(0.8701);">.cls</div>
<svg style="left:1492.5px;top:690.8px;" width="9" height="9" viewBox="0 0 9 9"><path d="M4.200 0V8.400M0 4.200H8.400" stroke="#6c6c6c" stroke-width="1" fill="none"/></svg>
<svg style="left:1502.5px;top:700.5px;" width="4" height="4" viewBox="0 0 4 4"><path d="M3.600 0V3.600H0Z" fill="#555"/></svg>
<div class="a" style="left:1224.5px;top:706.4px;width:287px;height:1px;background:#363636;"></div>
</div>
</body>
</html>
